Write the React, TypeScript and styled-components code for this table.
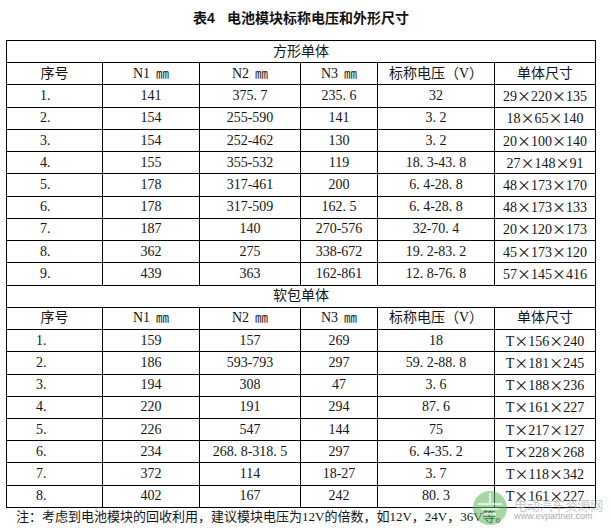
import styled, { createGlobalStyle } from "styled-components";

const square = [
  ["1.", "141", "375. 7", "235. 6", "32", "29×220×135"],
  ["2.", "154", "255-590", "141", "3. 2", "18×65×140"],
  ["3.", "154", "252-462", "130", "3. 2", "20×100×140"],
  ["4.", "155", "355-532", "119", "18. 3-43. 8", "27×148×91"],
  ["5.", "178", "317-461", "200", "6. 4-28. 8", "48×173×170"],
  ["6.", "178", "317-509", "162. 5", "6. 4-28. 8", "48×173×133"],
  ["7.", "187", "140", "270-576", "32-70. 4", "20×120×173"],
  ["8.", "362", "275", "338-672", "19. 2-83. 2", "45×173×120"],
  ["9.", "439", "363", "162-861", "12. 8-76. 8", "57×145×416"],
];

const soft = [
  ["1.", "159", "157", "269", "18", "T×156×240"],
  ["2.", "186", "593-793", "297", "59. 2-88. 8", "T×181×245"],
  ["3.", "194", "308", "47", "3. 6", "T×188×236"],
  ["4.", "220", "191", "294", "87. 6", "T×161×227"],
  ["5.", "226", "547", "144", "75", "T×217×127"],
  ["6.", "234", "268. 8-318. 5", "297", "6. 4-35. 2", "T×228×268"],
  ["7.", "372", "114", "18-27", "3. 7", "T×118×342"],
  ["8.", "402", "167", "242", "80. 3", "T×161×227"],
];

const colWidths = [96, 97, 101, 77, 117, 101];

function Size({ value }: { value: string }) {
  const parts = value.split("×");
  return (
    <>
      {parts.map((p, i) => (
        <span key={i}>
          {i > 0 && <Times>×</Times>}
          {p}
        </span>
      ))}
    </>
  );
}

function Group({
  title,
  rows,
  indent,
}: {
  title: string;
  rows: string[][];
  indent: number;
}) {
  return (
    <>
      <tr>
        <Cell colSpan={6}>{title}</Cell>
      </tr>
      <tr>
        <Cell>序号</Cell>
        <Cell>
          N1<Unit>㎜</Unit>
        </Cell>
        <Cell>
          N2<Unit>㎜</Unit>
        </Cell>
        <Cell>
          N3<Unit>㎜</Unit>
        </Cell>
        <Cell>标称电压（V）</Cell>
        <Cell>单体尺寸</Cell>
      </tr>
      {rows.map((r) => (
        <tr key={r[0]}>
          <Cell $indent={indent}>{r[0]}</Cell>
          <Cell>{r[1]}</Cell>
          <Cell>{r[2]}</Cell>
          <Cell>{r[3]}</Cell>
          <Cell>{r[4]}</Cell>
          <Cell>
            <Size value={r[5]} />
          </Cell>
        </tr>
      ))}
    </>
  );
}

export default function App() {
  return (
    <>
      <GlobalStyle />
      <Page>
        <Caption>
          <CaptionNo>表4</CaptionNo>电池模块标称电压和外形尺寸
        </Caption>
        <Table>
          <colgroup>
            {colWidths.map((w, i) => (
              <col key={i} style={{ width: w }} />
            ))}
          </colgroup>
          <tbody>
            <Group title="方形单体" rows={square} indent={33} />
            <Group title="软包单体" rows={soft} indent={29} />
          </tbody>
        </Table>
        <Note>注：考虑到电池模块的回收利用，建议模块电压为12V的倍数，如12V，24V，36V等。</Note>
        <Watermark>
          <svg width="36" height="36" viewBox="0 0 36 36">
            <circle cx="18" cy="18" r="17" fill="#5cb85c" opacity="0.55" />
            <path
              d="M18 3 V14 M6 14 H30 M9 19 H27 M12 24 H24"
              stroke="#fff"
              strokeWidth="2.2"
              opacity="0.7"
            />
          </svg>
          <WatermarkText>
            <WatermarkName>电动汽车资源网</WatermarkName>
            <WatermarkUrl>www.evpartner.com</WatermarkUrl>
          </WatermarkText>
        </Watermark>
      </Page>
    </>
  );
}

const GlobalStyle = createGlobalStyle`
  html, body {
    margin: 0;
    background: #fff;
  }
  body {
    font-family: "Liberation Serif", "Noto Sans CJK SC", serif;
    color: #141414;
  }
`;

const Page = styled.div`
  position: relative;
  width: 611px;
  height: 531px;
  padding-left: 6px;
  box-sizing: border-box;
  overflow: hidden;
`;

const Caption = styled.div`
  width: 590px;
  height: 20px;
  padding-top: 8px;
  margin-bottom: 12px;
  text-align: center;
  font: bold 14px/20px "Liberation Sans", "Noto Sans CJK SC", sans-serif;
  color: #111;
`;

const CaptionNo = styled.span`
  margin-right: 12px;
`;

const Table = styled.table`
  width: 590px;
  border-collapse: collapse;
  table-layout: fixed;
  font-size: 14px;
  tr {
    height: 22.24px;
  }
`;

const Cell = styled.td<{ $indent?: number }>`
  border: 1px solid #000;
  padding: 0 0 0 ${(p) => p.$indent ?? 0}px;
  text-align: ${(p) => (p.$indent ? "left" : "center")};
  vertical-align: middle;
  white-space: nowrap;
  line-height: 16px;
`;

const Unit = styled.span`
  margin-left: 6px;
  font-size: 13px;
`;

const Times = styled.span`
  display: inline-block;
  width: 14px;
  text-align: center;
  font-family: "Noto Sans CJK SC", sans-serif;
`;

const Note = styled.div`
  padding-left: 10px;
  font-size: 13px;
  line-height: 18px;
`;

const Watermark = styled.div`
  position: absolute;
  left: 472px;
  top: 490px;
  display: flex;
  align-items: center;
  gap: 6px;
  pointer-events: none;
`;

const WatermarkText = styled.div`
  display: flex;
  flex-direction: column;
  margin-top: 4px;
`;

const WatermarkName = styled.span`
  font: 13px/13px "Noto Sans CJK SC", sans-serif;
  color: rgba(170, 170, 170, 0.65);
  letter-spacing: -0.3px;
`;

const WatermarkUrl = styled.span`
  font: 9px/11px "Liberation Sans", sans-serif;
  color: rgba(150, 150, 150, 0.85);
`;
